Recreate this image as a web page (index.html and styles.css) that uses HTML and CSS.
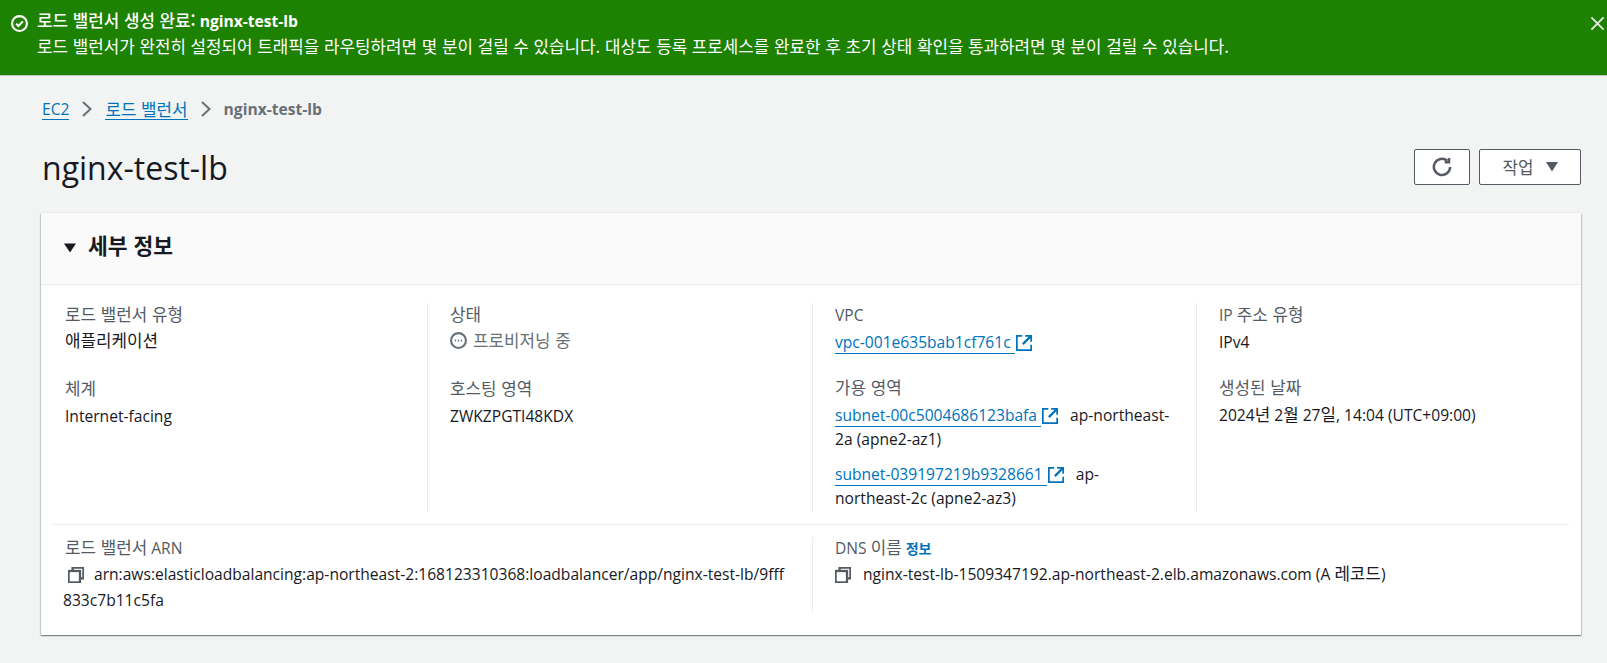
FILE: index.html
```html
<!DOCTYPE html>
<html lang="ko">
<head>
<meta charset="utf-8">
<title>nginx-test-lb</title>
<link rel="stylesheet" href="styles.css">
</head>
<body>
<div class="flash">
  <svg class="flash-icon" viewBox="0 0 16 16"><circle cx="8" cy="8" r="7"/><path d="M4.8 8.2l2.2 2.2 4.2-4.4"/></svg>
  <div class="flash-text">
    <div class="flash-title"><span class="ko strong">로드 밸런서 생성 완료:</span> <b>nginx-test-lb</b></div>
    <div class="ko">로드 밸런서가 완전히 설정되어 트래픽을 라우팅하려면 몇 분이 걸릴 수 있습니다. 대상도 등록 프로세스를 완료한 후 초기 상태 확인을 통과하려면 몇 분이 걸릴 수 있습니다.</div>
  </div>
  <svg class="flash-close" viewBox="0 0 16 16"><path d="M1.5 1.5l13 13M14.5 1.5l-13 13"/></svg>
</div>
<main class="page">
  <nav class="crumbs">
    <a href="#">EC2</a>
    <svg class="chev" viewBox="0 0 10 16"><path d="M1 1l7.5 7L1 15"/></svg>
    <a class="ko" href="#">로드 밸런서</a>
    <svg class="chev" viewBox="0 0 10 16"><path d="M1 1l7.5 7L1 15"/></svg>
    <span class="crumb-now">nginx-test-lb</span>
  </nav>
  <header class="head">
    <h1>nginx-test-lb</h1>
    <div class="actions">
      <button class="btn btn-icon" type="button" aria-label="새로 고침"><svg viewBox="0 0 16 16"><path d="M14.5 8a6.5 6.5 0 1 1-2.3-5"/><path d="M13.6 .8v3.4h-3.4"/></svg></button>
      <button class="btn btn-menu" type="button"><span class="ko">작업</span><svg viewBox="0 0 12 10"><path d="M0 0h12L6 9.5z"/></svg></button>
    </div>
  </header>
  <section class="card">
    <div class="card-head">
      <svg class="caret" viewBox="0 0 12 10"><path d="M0 .5h12L6 9.5z"/></svg>
      <h2>세부 정보</h2>
    </div>
    <div class="card-body">
      <div class="cols">
        <div class="col">
          <div class="field"><div class="label ko">로드 밸런서 유형</div><div class="value ko">애플리케이션</div></div>
          <div class="field"><div class="label ko">체계</div><div class="value">Internet-facing</div></div>
        </div>
        <div class="col">
          <div class="field"><div class="label ko">상태</div><div class="value status ko"><svg class="status-icon" viewBox="0 0 16 16"><circle cx="8" cy="8" r="7"/><path d="M4.6 8h1.2M7.4 8h1.2M10.2 8h1.2"/></svg>프로비저닝 중</div></div>
          <div class="field"><div class="label ko">호스팅 영역</div><div class="value">ZWKZPGTI48KDX</div></div>
        </div>
        <div class="col">
          <div class="field"><div class="label">VPC</div><div class="value"><a href="#">vpc-001e635bab1cf761c </a><svg class="ext" viewBox="1 1 14 14"><path d="M6.5 1.5H1.5v13h13v-5"/><path d="M9 1.5h5.5V7M14.5 1.5L7 9"/></svg></div></div>
          <div class="field">
            <div class="label ko">가용 영역</div>
            <div class="value az"><a href="#">subnet-00c5004686123bafa </a><svg class="ext" viewBox="1 1 14 14"><path d="M6.5 1.5H1.5v13h13v-5"/><path d="M9 1.5h5.5V7M14.5 1.5L7 9"/></svg> ap-northeast-2a (apne2-az1)</div>
            <div class="value"><a href="#">subnet-039197219b9328661 </a><svg class="ext" viewBox="1 1 14 14"><path d="M6.5 1.5H1.5v13h13v-5"/><path d="M9 1.5h5.5V7M14.5 1.5L7 9"/></svg> ap-northeast-2c (apne2-az3)</div>
          </div>
        </div>
        <div class="col">
          <div class="field"><div class="label"><span>IP</span> <span class="ko">주소 유형</span></div><div class="value">IPv4</div></div>
          <div class="field"><div class="label ko">생성된 날짜</div><div class="value">2024<span class="ko">년</span> 2<span class="ko">월</span> 27<span class="ko">일</span>, 14:04 (UTC+09:00)</div></div>
        </div>
      </div>
      <div class="wide">
        <div class="col">
          <div class="label"><span class="ko">로드 밸런서</span> ARN</div>
          <div class="value arn"><svg class="copy" viewBox="1 1 14 14"><path d="M5 4V1.5h9.5V11H12"/><rect x="1.5" y="4.5" width="10" height="10"/></svg>arn:aws:elasticloadbalancing:ap-northeast-2:168123310368:loadbalancer/app/nginx-test-lb/9fff833c7b11c5fa</div>
        </div>
        <div class="col">
          <div class="label">DNS <span class="ko">이름</span> <a class="info" href="#">정보</a></div>
          <div class="value dns"><svg class="copy" viewBox="1 1 14 14"><path d="M5 4V1.5h9.5V11H12"/><rect x="1.5" y="4.5" width="10" height="10"/></svg>nginx-test-lb-1509347192.ap-northeast-2.elb.amazonaws.com (A <span class="ko">레코드</span>)</div>
        </div>
      </div>
    </div>
  </section>
</main>
</body>
</html>
```
FILE: styles.css
```css
* { box-sizing: border-box; }
html, body { margin: 0; height: 663px; overflow: hidden; }
body {
  background: #f2f3f3;
  color: #16191f;
  font: 15.6px/24px "Open Sans", "Noto Sans CJK KR", sans-serif;
}
a { color: #0073bb; text-decoration: none; }
svg { fill: none; stroke: currentColor; stroke-width: 2; }
.ko { font-family: "Noto Sans CJK KR", sans-serif; font-size: 16.85px; }
span.ko { line-height: 1; }
.strong { font-weight: 500; }

.flash {
  display: flex;
  height: 76px;
  padding: 10px 2px 0 11px;
  background: #1d8102;
  border-bottom: 1px solid #bfc4c4;
  color: #fff;
}
.flash-icon { width: 17px; height: 17px; margin: 5px 9px 0 0; flex: none; }
.flash-text { flex: 1; }
.flash-text > div { height: 24px; }
.flash-title { margin-top: -1px; margin-bottom: 1px; }
.flash-close { width: 15px; height: 15px; margin-top: 6px; color: #e6e6e6; }

.page { padding: 21px 26px 0 42px; }
.crumbs { display: flex; align-items: center; height: 24px; gap: 13px; }
.crumbs a { border-bottom: 1px solid #0073bb; line-height: 20px; }
.chev { width: 10px; height: 16px; color: #687078; flex: none; }
.crumb-now { color: #687078; font-weight: 700; }

.head { display: flex; justify-content: space-between; align-items: center; margin-top: 17px; height: 60px; }
h1 { margin: 0; font-size: 32px; font-weight: 400; line-height: 40px; }
.actions { display: flex; gap: 9px; margin-bottom: 2px; }
.btn {
  height: 36px;
  background: #fff;
  border: 1px solid #545b64;
  border-radius: 2px;
  color: #545b64;
  font: inherit;
  display: flex;
  align-items: center;
  justify-content: center;
  padding: 0;
}
.btn-icon { width: 56px; }
.btn-icon svg { width: 20px; height: 20px; }
.btn-menu { width: 102px; gap: 12px; }
.btn-menu svg { width: 12px; height: 10px; fill: currentColor; stroke: none; }

.card {
  margin: 15px 0 0 -1px;
  height: 422px;
  background: #fff;
  box-shadow: 0 -1px 0 0 #eaeded, 0 1px 1px 0 rgba(0,28,36,.3), 1px 1px 1px 0 rgba(0,28,36,.15), -1px 1px 1px 0 rgba(0,28,36,.15);
}
.card-head {
  display: flex;
  align-items: center;
  gap: 12px;
  height: 72px;
  padding: 0 0 2px 23px;
  background: #fafafa;
  border-bottom: 1px solid #eaeded;
}
.caret { width: 12px; height: 10px; fill: #16191f; stroke: none; }
h2 { margin: 0 0 5px; font-family: "Noto Sans CJK KR", sans-serif; font-size: 21.5px; font-weight: 700; line-height: 28px; }

.card-body { padding: 18px 12px 0; }
.cols {
  display: grid;
  grid-template-columns: 374px 385px 384px 1fr;
  grid-template-rows: 209px;
}
.col { padding: 0 12px 0 12px; border-left: 1px solid #eaeded; }
.col:first-child { border-left: 0; }
.cols .col + .col { padding-left: 22px; padding-right: 25px; }
.field { margin-bottom: 21px; }
.field:first-child { margin-bottom: 22px; }
.field:last-child { margin-bottom: 0; }
.label.ko { margin: -1px 0 1px; }
.label { color: #545b64; }
.value { margin-top: 4px; }
.field:first-child .value:not(.ko) { margin-top: 3px; }
.value.ko { margin-top: 2px; padding-bottom: 3px; }
.value .ext { margin: 0 8px 0 1px; }
.az { margin-bottom: 11px; }
.ext { width: 16px; height: 16px; vertical-align: -3px; color: #0073bb; }
.value a { border-bottom: 1px solid #0073bb; }
.status { display: flex; align-items: center; gap: 6px; color: #687078; }
.status-icon { width: 17px; height: 17px; }

.wide {
  display: grid;
  grid-template-columns: 759px 1fr;
  margin-top: 12px;
  padding-top: 12px;
  border-top: 1px solid #eaeded;
}
.wide .col { height: 76px; padding-right: 22px; word-break: break-all; }
.wide .col + .col { padding-left: 22px; }
.wide .label { margin-top: -1px; }
.wide .value { margin-top: 1px; line-height: 26px; }
.copy { width: 16px; height: 16px; color: #545b64; vertical-align: -3px; margin: 0 12px 0 0; }
.arn { margin-left: -2px; }
.arn .copy { margin-left: 5px; margin-right: 10px; }
.info { font-family: "Noto Sans CJK KR", sans-serif; font-size: 14px; font-weight: 700; line-height: 1; }
```
